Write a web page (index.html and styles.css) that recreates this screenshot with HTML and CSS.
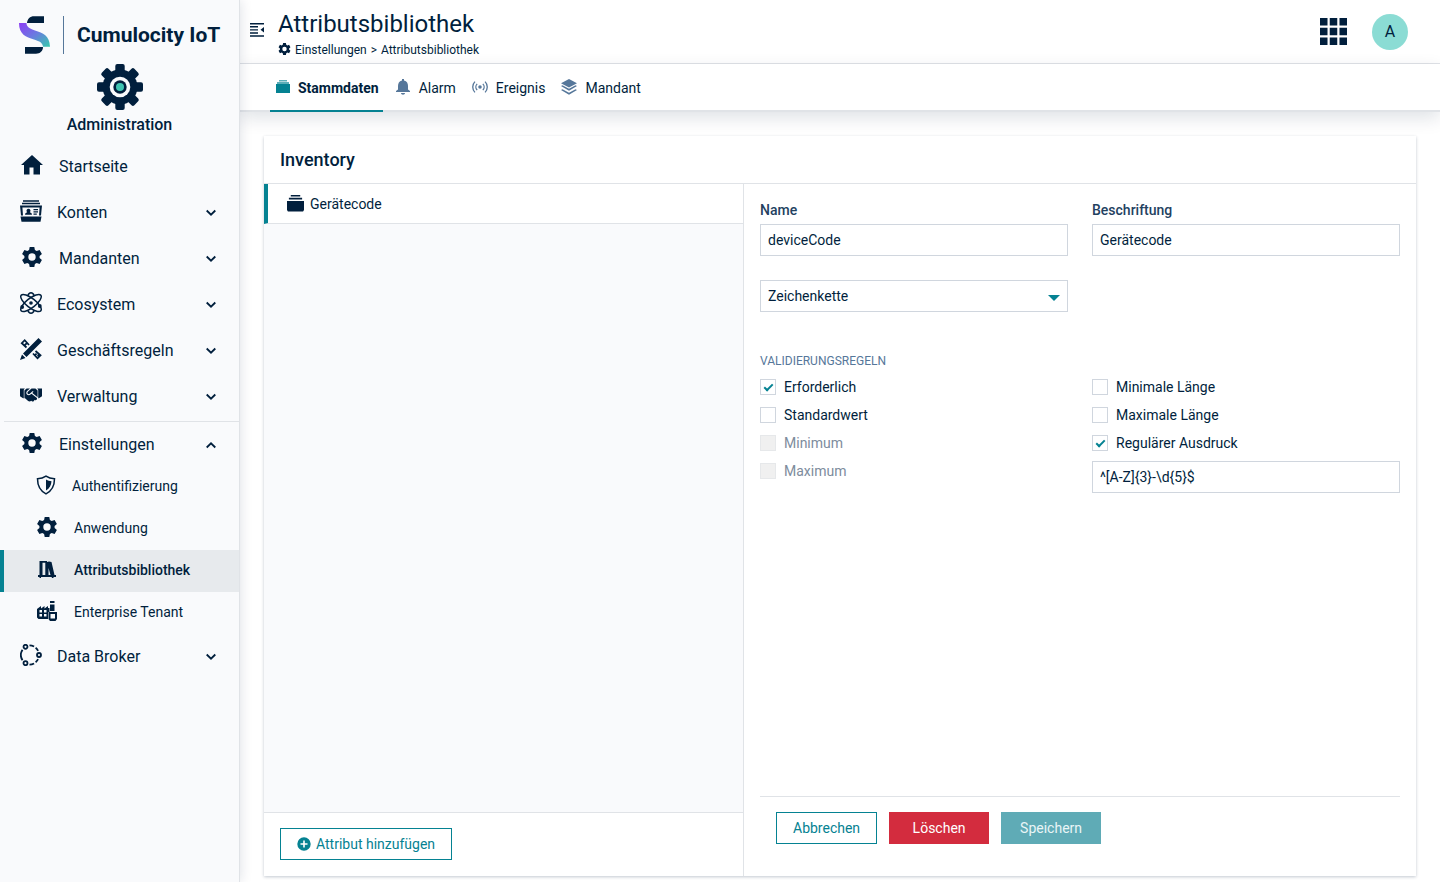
FILE: index.html
```html
<!DOCTYPE html>
<html lang="de">
<head>
<meta charset="utf-8">
<meta name="viewport" content="width=device-width, initial-scale=1">
<title>Attributsbibliothek</title>
<link rel="stylesheet" href="styles.css">
</head>
<body>
<svg class="sprite" aria-hidden="true">
  <symbol id="gear" viewBox="2 2 20 20"><path fill-rule="evenodd" d="M9.700 2h4.600l.6 3 1.800 1 2.900-1 2.300 4-2.300 2v2l2.300 2-2.300 4-2.900-1-1.800 1-.6 3H9.700l-.6-3-1.800-1-2.900 1-2.300-4 2.300-2v-2l-2.300-2 2.300-4 2.900 1 1.800-1zM12 8.300a3.700 3.700 0 1 0 0 7.400 3.700 3.700 0 0 0 0-7.400z"/></symbol>
  <symbol id="stack" viewBox="0 0 18 18"><path d="M4 0h10v1.500H4zM2 3h14v1.800H2zM0 6.300h18V16l-1 1.500H1L0 16z"/></symbol>
  <symbol id="chevron" viewBox="0 0 12 12"><path d="M1.700 3.500 6 7.700 10.300 3.500" fill="none" stroke="currentColor" stroke-width="1.800"/></symbol>
</svg>
<div class="app">
  <aside class="sidebar">
    <div class="brand">
      <svg class="brand-mark" viewBox="0 0 32 38" aria-hidden="true">
        <defs><linearGradient id="brandFade" x1="0" y1="0" x2="1" y2="1"><stop offset="0" stop-color="#8d3cf5"/><stop offset=".5" stop-color="#6a7be0"/><stop offset="1" stop-color="#36c9ac"/></linearGradient></defs>
        <path class="ink" d="M8 7C8.500 3 11 .3 15 .3h10V7zM6 31h18c0 4-3 6.700-7 6.700H6z"/>
        <path fill="url(#brandFade)" d="M0 7h7.500c0 4 3 5.500 8.500 7.500C24 17.300 30.500 19 31 30.700h-7c-.5-4-3-5.200-9-7.200C7 21 0 18.500 0 7z"/>
      </svg>
      <span class="brand-rule"></span>
      <span class="brand-name">Cumulocity IoT</span>
    </div>
    <div class="app-title">
      <svg class="app-gear" viewBox="-23 -23 46 46" aria-hidden="true">
        <g class="ink"><circle r="17.500"/>
          <rect id="tooth" x="-4.700" y="-23" width="9.400" height="46" rx="2"/>
          <use href="#tooth" transform="rotate(45)"/><use href="#tooth" transform="rotate(90)"/><use href="#tooth" transform="rotate(135)"/></g>
        <circle r="10.300" fill="#f9fafc"/><circle r="6.700" class="ink"/><circle r="4" fill="#3fc4b2"/>
      </svg>
      <span>Administration</span>
    </div>
    <nav class="nav" aria-label="Hauptnavigation">
      <a class="nav-item" href="#"><svg class="icon wide" viewBox="0 0 22 20"><path d="M11 0 0 10h3v9.500h5.500v-7h4v7H19V10h3z"/></svg><span>Startseite</span></a>
      <a class="nav-item" href="#"><svg class="icon" viewBox="0 0 22 22"><path d="M3 .3h16v1.500H3zM2 2.800h18v1.500H2zM0 5.500h22l-1 10h-2l.6-8H2.400l.6 8H1zM.5 16.500h21l-1 5.200h-19zM8.500 8.800a2 2 0 1 1-.01 0zM5 14.700c0-2 2-2 2.300-2.700h2.400c.3.700 2.300.7 2.300 2.700zM13.500 9H18v1.200h-4.500zM13.500 11.300H18v1.200h-4.500zM13.500 13.500h3.300v1.200h-3.300z"/></svg><span>Konten</span><svg class="chevron"><use href="#chevron"/></svg></a>
      <a class="nav-item" href="#"><svg class="icon wide"><use href="#gear"/></svg><span>Mandanten</span><svg class="chevron"><use href="#chevron"/></svg></a>
      <a class="nav-item" href="#"><svg class="icon" viewBox="-11 -11 22 22"><g class="line"><ellipse rx="12.500" ry="4.600" transform="rotate(38)"/><ellipse rx="12.500" ry="4.600" transform="rotate(-38)"/><path d="M-3.300-7C-2.500-9.500-1-10.200 0-10.200S2.500-9.500 3.300-7M-3.300 7C-2.500 9.500-1 10.200 0 10.200S2.500 9.500 3.300 7"/></g><circle r="1.800"/><circle cx="-8.800" cy="4" r="1.900"/><circle cx="8.800" cy="3" r="1.900"/></svg><span>Ecosystem</span><svg class="chevron"><use href="#chevron"/></svg></a>
      <a class="nav-item" href="#"><svg class="icon" viewBox="0 0 22 22"><path d="M18.500 0 22 3.500 6.500 19 3 15.500zM2 16.500 5.500 20 0 22z"/><path class="line thick" d="M9 7 4.700 2.200 1.800 5.200 6.500 9.500M5 7l1.800-1.800M13 15.500l4.500 4.700 3-3L15.500 13M15 17.200l1.600-1.600M17.600 18l1.600-1.600"/></svg><span>Geschäftsregeln</span><svg class="chevron"><use href="#chevron"/></svg></a>
      <a class="nav-item" href="#"><svg class="icon" viewBox="0 -64 640 640"><path d="M434.700 64h-85.900c-8 0-15.700 3-21.600 8.400l-98.300 90c-.1.1-.2.3-.3.4-16.600 15.600-16.300 40.500-2.100 56 12.700 13.900 39.400 17.600 56.100 2.700.1-.1.3-.1.4-.2l79.900-73.200c6.500-5.900 16.700-5.500 22.600 1 6 6.500 5.500 16.600-1 22.600l-26.100 23.900L504 313.800c2.900 2.400 5.500 5 7.900 7.700V128l-54.600-54.600c-5.900-6-14.100-9.400-22.600-9.400zM530 100v250h20l90-60V64H500zM0 64v226l90 60h20V100l30-36zM483.900 338.700 334.600 217.500l-30 27.500c-29.700 27.100-75.200 24.500-101.700-4.400-26.900-29.400-24.800-74.900 4.400-101.700L289.100 64h-83.800c-8.500 0-16.600 3.400-22.600 9.400L128 128v223.900h18.300l90.500 81.900c27.400 22.300 67.700 18.100 90-9.300l.2-.2 17.900 15.500c15.900 13 39.400 10.500 52.300-5.400l31.400-38.600 5.400 4.400c13.700 11.100 33.900 9.100 45-4.700l9.500-11.700c11.200-13.800 9.100-33.900-4.600-45.100z"/></svg><span>Verwaltung</span><svg class="chevron"><use href="#chevron"/></svg></a>
      <div class="nav-group">
        <a class="nav-item head" href="#" aria-expanded="true"><svg class="icon wide"><use href="#gear"/></svg><span>Einstellungen</span><svg class="chevron up"><use href="#chevron"/></svg></a>
        <a class="nav-item sub" href="#"><svg class="icon" viewBox="0 0 20 20"><path class="line" d="M10 1.200C7.500 3 4 3.700 1.500 3.700 1.500 11 3.500 15.500 10 18.800c6.500-3.300 8.500-7.800 8.500-15.100C16 3.700 12.500 3 10 1.200z"/><path d="M10 4.500c2 1.200 3.500 1.500 5.500 1.800-.3 4-1.800 7-5.500 9.200z"/></svg><span>Authentifizierung</span></a>
        <a class="nav-item sub" href="#"><svg class="icon wide"><use href="#gear"/></svg><span>Anwendung</span></a>
        <a class="nav-item sub active" href="#" aria-current="page"><svg class="icon wide" viewBox="0 0 20 20"><path fill-rule="evenodd" d="M2.500 2H10v1l2-.5 2.500.5L17.500 16H19v2h-2.500v1h-1.700v-1H4v1H2.500v-1H1v-2h1.500zM5.500 3.800V16h2.800V3.800zM11.500 9v7h2z"/></svg><span>Attributsbibliothek</span></a>
        <a class="nav-item sub" href="#"><svg class="icon wide" viewBox="0 0 20 20"><path fill-rule="evenodd" d="M13 0h4.500v2H13zM13 3.500h4.500V10H13zM0 8l4-3v2.500L7.500 5v2.500L11 5v2h1.500v4H11v7H1.500L0 16.500zM2.500 9v2.500H5V9zm4.500 0v2.500h2.500V9zM2.500 13v2.500H5V13zM7 13v2.500h2.500V13zM11.500 11H20v7l-1.500 2h-5.500l-1.500-2zM13.500 13v4.500H18V13z"/></svg><span>Enterprise Tenant</span></a>
      </div>
      <a class="nav-item" href="#"><svg class="icon" viewBox="0 0 22 22"><g class="line thick"><circle cx="5.500" cy="2.800" r="2"/><circle cx="19" cy="11" r="2"/><circle cx="5.500" cy="19.200" r="2"/><path d="M2.500 5.800a9.500 9.500 0 0 0 0 10.400M9.500 1.300c1.800 0 3.300.5 4.600 1.200M15.600 3.800c1.100.8 2 2 2.500 3M9.500 20.700c1.800 0 3.300-.5 4.600-1.200M15.600 18.200c1.100-.8 2-2 2.500-3"/></g></svg><span>Data Broker</span><svg class="chevron"><use href="#chevron"/></svg></a>
    </nav>
  </aside>

  <div class="page">
    <header class="topbar">
      <button class="plain" type="button" aria-label="Navigation einklappen"><svg class="collapse" viewBox="0 0 14 14"><path d="M0 0h14v1.500H0zM0 3h8v1.400H0zM0 6.200h8v1.400H0zM0 9.300h8v1.400H0zM0 12.300h14v1.500H0zM14 4v5.500l-3.500-2.700z"/></svg></button>
      <div class="heading">
        <h1>Attributsbibliothek</h1>
        <div class="crumbs"><svg><use href="#gear"/></svg><a href="#">Einstellungen</a><span>&gt;</span><a href="#">Attributsbibliothek</a></div>
      </div>
      <button class="plain" type="button" aria-label="Anwendungen"><svg class="grid-icon" viewBox="0 0 27 27"><path d="M0 0h7.500v7.500H0zM9.750 0h7.500v7.500h-7.500zM19.500 0H27v7.500h-7.500zM0 9.750h7.500v7.500H0zM9.750 9.750h7.500v7.500h-7.500zM19.500 9.750H27v7.500h-7.500zM0 19.500h7.500V27H0zM9.750 19.500h7.500V27h-7.500zM19.500 19.500H27V27h-7.500z"/></svg></button>
      <button class="avatar" type="button" aria-label="Benutzer A">A</button>
    </header>
    <nav class="tabs" aria-label="Bereiche">
      <a class="tab active" href="#"><svg class="teal-stack" viewBox="0 0 14 14"><path opacity=".65" d="M3 0h8v1.500H3zM1 2h12v2H1z"/><path d="M0 4h14v9H0z"/></svg>Stammdaten</a>
      <a class="tab" href="#"><svg viewBox="0 0 14 16"><path d="M6 0h2v1.500c3 .5 4 3 4 5.500v3.500L14 12v1H0v-1l2-1.500V7c0-2.500 1-5 4-5.500zM5 14h4c0 2.200-4 2.200-4 0z"/></svg>Alarm</a>
      <a class="tab" href="#"><svg viewBox="0 0 18 14"><circle cx="9" cy="7" r="2"/><path class="line" d="M5.800 3.500a5 5 0 0 0 0 7M12.200 3.500a5 5 0 0 1 0 7M3.300 1c-3.300 3.500-3.300 8.500 0 12M14.700 1c3.300 3.500 3.300 8.500 0 12"/></svg>Ereignis</a>
      <a class="tab" href="#"><svg viewBox="0 0 16 16"><path d="m8 0 8 4.300-8 4.200-8-4.200zM0 7l1.500-.8L8 9.700l6.500-3.500L16 7l-8 4.700zM0 11l1.500-.8L8 13.800l6.500-3.600L16 11l-8 4.800z"/></svg>Mandant</a>
    </nav>

    <main class="content">
      <section class="card">
        <h2>Inventory</h2>
        <div class="split">
          <div class="list-pane">
            <a class="list-row" href="#"><svg><use href="#stack"/></svg>Gerätecode</a>
            <div class="list-footer"><button class="btn outline" type="button"><svg viewBox="0 0 14 14"><path fill-rule="evenodd" d="M7 .3a6.700 6.700 0 1 1 0 13.400A6.700 6.700 0 0 1 7 .3zM6.200 3.500v2.700H3.500v1.600h2.700v2.700h1.600V7.800h2.700V6.200H7.800V3.500z"/></svg>Attribut hinzufügen</button></div>
          </div>
          <form class="form">
            <div class="fields">
              <div class="field"><label for="name">Name</label><input class="control" id="name" type="text" value="deviceCode"></div>
              <div class="field"><label for="caption">Beschriftung</label><input class="control" id="caption" type="text" value="Gerätecode"></div>
              <div class="select"><select class="control" aria-label="Typ"><option>Zeichenkette</option></select></div>
            </div>
            <fieldset>
              <legend>VALIDIERUNGSREGELN</legend>
              <div class="rules">
                <div class="checks">
                  <label><input type="checkbox" checked>Erforderlich</label>
                  <label><input type="checkbox">Standardwert</label>
                  <label class="off"><input type="checkbox" disabled>Minimum</label>
                  <label class="off"><input type="checkbox" disabled>Maximum</label>
                </div>
                <div class="checks">
                  <label><input type="checkbox">Minimale Länge</label>
                  <label><input type="checkbox">Maximale Länge</label>
                  <label><input type="checkbox" checked>Regulärer Ausdruck</label>
                  <input class="control" type="text" aria-label="Regulärer Ausdruck" value="^[A-Z]{3}-\d{5}$">
                </div>
              </div>
            </fieldset>
            <div class="actions">
              <button class="btn outline" type="button">Abbrechen</button>
              <button class="btn danger" type="button">Löschen</button>
              <button class="btn save" type="submit" disabled>Speichern</button>
            </div>
          </form>
        </div>
      </section>
    </main>
  </div>
</div>
</body>
</html>
```
FILE: styles.css
```css
:root {
  --ink: #011f3d;
  --teal: #058292;
  --line: #e0e3e7;
  --pale: #f9fafc;
  --slate: #56779a;
}
* { box-sizing: border-box; }
body { margin: 0; font: 14px/20px Roboto, sans-serif; color: var(--ink); background: #fff; }
a { color: inherit; text-decoration: none; }
svg { display: block; flex: none; fill: currentColor; }
button, input, select { font: inherit; color: inherit; }
.sprite { position: absolute; width: 0; height: 0; }
.ink { fill: var(--ink); }
.line { fill: none; stroke: currentColor; stroke-width: 1.5; }
.line.thick { stroke-width: 1.8; }

.app { display: flex; min-height: 100vh; }

/* Sidebar */
.sidebar {
  position: relative;
  z-index: 2;
  flex: none;
  width: 240px;
  background: var(--pale);
  border-right: 1px solid var(--line);
  box-shadow: 0 0 12px rgba(1, 31, 61, .14);
}
.brand { display: flex; align-items: center; padding: 16px 16px 0 19px; height: 54px; }
.brand-mark { width: 32px; height: 38px; }
.brand-rule { flex: none; width: 1px; height: 38px; margin: 0 13px 0 12px; background: var(--slate); }
.brand-name { font-size: 21px; line-height: 24px; font-weight: 700; white-space: nowrap; }
.app-title { display: flex; flex-direction: column; align-items: center; gap: 5px; padding-top: 10px; font-size: 16px; font-weight: 500; line-height: 20px; }
.app-gear { width: 46px; height: 46px; }
.nav { padding-top: 9px; }
.nav-item { display: flex; align-items: center; gap: 15px; height: 46px; padding: 0 22px 0 20px; font-size: 16px; }
.icon { width: 22px; height: 22px; margin-bottom: 4px; }
.icon.wide { width: 24px; height: 20px; }
.chevron { width: 12px; height: 12px; margin-left: auto; }
.chevron.up { transform: rotate(180deg); }
.nav-group { margin: 1px 0 0 4px; padding-top: 1px; border-top: 1px solid var(--line); }
.nav-group .head { height: 43px; padding-left: 16px; }
.nav-group .sub { height: 42px; margin-left: -4px; padding: 0 22px 2px 36px; gap: 16px; font-size: 14px; }
.sub .icon { width: 20px; height: 20px; margin-bottom: 2px; }
.sub .icon.wide { width: 22px; }
.nav-group .sub.active { padding-left: 32px; border-left: 4px solid var(--teal); background: #e7eaed; font-weight: 500; }

/* Header */
.page { flex: 1; min-width: 0; display: flex; flex-direction: column; }
.topbar { display: flex; align-items: center; height: 64px; padding: 0 32px 0 10px; border-bottom: 1px solid var(--line); }
.plain { padding: 0; border: 0; background: none; }
.collapse { width: 14px; height: 14px; margin-bottom: 3px; }
.heading { flex: 1; padding: 3px 0 0 14px; }
h1 { margin: 0; font-size: 24px; line-height: 34px; font-weight: 400; }
.crumbs { display: flex; align-items: center; gap: 4px; font-size: 12px; line-height: 18px; }
.crumbs svg { width: 13px; height: 12px; margin-bottom: 2px; }
.grid-icon { width: 27px; height: 27px; }
.avatar { width: 36px; height: 36px; margin-left: 25px; padding: 0; border: 0; border-radius: 50%; background: #8bdcd4; font-size: 16px; }
.tabs {
  position: relative;
  z-index: 1;
  display: flex;
  height: 48px;
  padding: 0 30px;
  border-bottom: 2px solid var(--line);
  box-shadow: 0 6px 18px rgba(1, 31, 61, .13);
}
.tab { display: flex; align-items: center; gap: 8px; height: 48px; padding: 0 4px 0 6px; margin-right: 6px; }
.tab svg { width: 16px; height: 16px; margin-bottom: 3px; color: var(--slate); }
.tab .teal-stack { width: 14px; height: 14px; margin-bottom: 2px; color: var(--teal); }
.tab.active { box-shadow: inset 0 -2px var(--teal); font-weight: 700; }

/* Card */
.content { flex: 1; display: flex; padding: 24px 24px 6px; }
.card { flex: 1; display: flex; flex-direction: column; background: #fff; box-shadow: 0 1px 3px rgba(1, 31, 61, .24); }
h2 { margin: 0; padding: 12px 16px 11px; border-bottom: 1px solid var(--line); font-size: 18px; line-height: 24px; font-weight: 500; }
.split { flex: 1; display: grid; grid-template-columns: 5fr 7fr; }
.list-pane { display: flex; flex-direction: column; border-right: 1px solid var(--line); background: var(--pale); }
.list-row { display: flex; align-items: center; gap: 6px; height: 40px; padding-left: 19px; border-left: 4px solid var(--teal); border-bottom: 1px solid var(--line); background: #fff; }
.list-row svg { width: 17px; height: 17px; }
.list-footer { margin-top: auto; padding: 15px 16px 16px; border-top: 1px solid var(--line); background: #fff; }
.btn { display: flex; align-items: center; justify-content: center; gap: 5px; height: 32px; min-width: 100px; padding: 0 16px; border: 1px solid transparent; }
.btn svg { width: 14px; height: 14px; }
.outline { border-color: var(--teal); background: #fff; color: var(--teal); }
.danger { background: #d32c3e; color: #fff; }
.save { background: #5fabb6; color: #e9f5f6; }

/* Form */
.form { display: flex; flex-direction: column; padding: 16px 16px 0; }
.fields, .rules { display: grid; grid-template-columns: 1fr 1fr; gap: 24px; }
.field label { display: block; padding-bottom: 4px; color: #23415f; font-weight: 500; }
.control { display: block; width: 100%; height: 32px; padding: 0 7px; border: 1px solid #d0d6de; border-radius: 0; background: #fff; }
.select { position: relative; }
.select .control { appearance: none; }
.select::after { content: ""; position: absolute; right: 8px; top: 15px; border: 6px solid transparent; border-top-color: var(--teal); border-bottom: 0; pointer-events: none; }
fieldset { margin: 40px 0 0; padding: 0; border: 0; min-width: 0; }
legend { padding: 0 0 4px; color: var(--slate); font-size: 12px; line-height: 18px; }
.checks { display: flex; flex-direction: column; gap: 8px; padding-top: 3px; }
.checks label { display: flex; align-items: center; gap: 8px; }
.off { color: #7d8c9d; }
input[type="checkbox"] { appearance: none; flex: none; display: grid; place-items: center; width: 16px; height: 16px; margin: 0; border: 1px solid #d0d6de; background: #fff; }
input[type="checkbox"]:checked::after { content: ""; width: 9px; height: 5px; box-sizing: border-box; margin-bottom: 2px; border: 2px solid var(--teal); border-top: 0; border-right: 0; transform: rotate(-45deg); }
input[type="checkbox"]:disabled { border-color: #e6e8ea; background: #f0f0f0; }
.actions { display: flex; gap: 12px; margin-top: auto; padding: 15px 16px 32px; border-top: 1px solid var(--line); }
```
